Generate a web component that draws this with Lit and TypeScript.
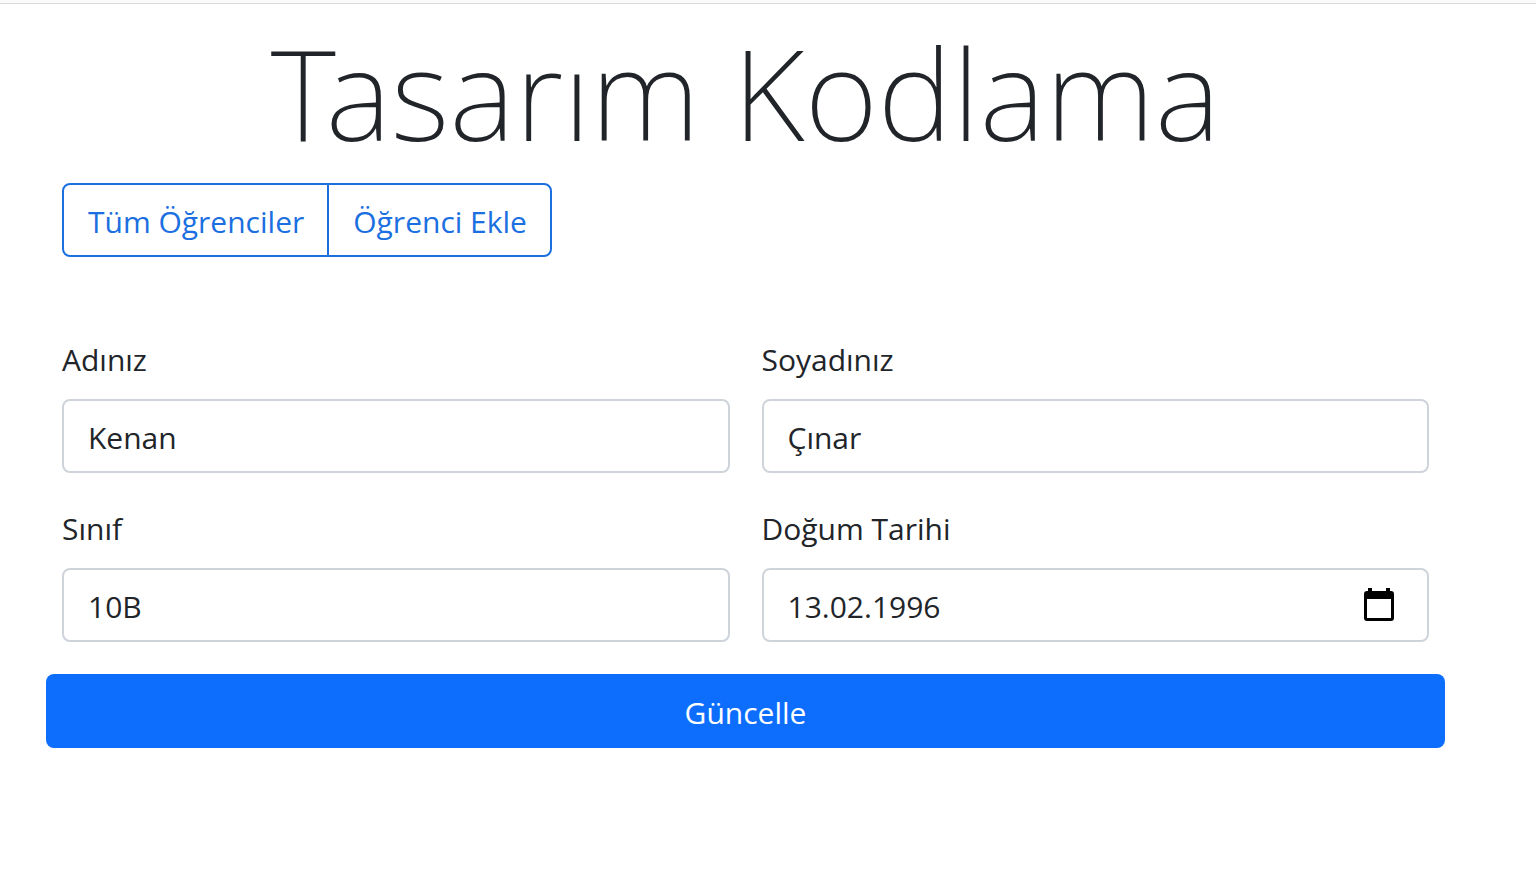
import { LitElement, html, css } from "lit";
import { customElement } from "lit/decorators.js";

@customElement("app-root")
export class AppRoot extends LitElement {
  static styles = css`
    :host {
      display: block;
      min-height: 100vh;
      box-sizing: border-box;
      background: #fff;
      color: #212529;
      font: 400 30px/47px "Open Sans", "Noto Sans", sans-serif;
    }
    *, *::before, *::after { box-sizing: border-box; }
    .edge {
      height: 4px;
      background: #fbfbfb;
      border-bottom: 1px solid #d9dadb;
    }
    .container {
      margin-left: 46px;
      margin-right: 91px;
    }
    h1 {
      margin: 0;
      padding-top: 12px;
      text-align: center;
      font-family: "Noto Sans", "Open Sans", sans-serif;
      font-weight: 200;
      font-size: 126px;
      line-height: 153px;
      white-space: nowrap;
    }
    nav {
      display: flex;
      margin: 14px 16px 0;
    }
    nav a {
      padding: 13px 23px 10px 24px;
      border: 2px solid #1b6fe0;
      color: #1b6fe0;
      text-decoration: none;
    }
    nav a:first-child { border-radius: 8px 0 0 8px; }
    nav a:last-child { border-radius: 0 8px 8px 0; margin-left: -2px; }
    form { margin: 79px 0 0; }
    .grid {
      display: grid;
      grid-template-columns: 1fr 1fr;
      gap: 32px;
      padding: 0 16px;
    }
    .field { display: flex; flex-direction: column; gap: 16px; }
    .control { display: grid; align-items: center; }
    input {
      width: 100%;
      height: 74px;
      padding: 2px 24px 0;
      border: 2px solid #ced4da;
      border-radius: 8px;
      background: #fff;
      color: #212529;
      font: inherit;
    }
    .control input, .picker { grid-area: 1 / 1; }
    .picker {
      justify-self: end;
      margin-right: 35px;
      padding: 0;
      border: 0;
      background: none;
      line-height: 0;
    }
    .submit {
      display: block;
      width: 100%;
      height: 74px;
      margin-top: 32px;
      padding: 2px 24px 0;
      border: 0;
      border-radius: 8px;
      background: #0d6efd;
      color: #fff;
      font: inherit;
    }
  `;

  private field(id: string, label: string, value: string) {
    return html`<div class="field">
      <label for=${id}>${label}</label>
      <input id=${id} type="text" .value=${value} />
    </div>`;
  }

  render() {
    return html`<div class="edge"></div>
    <main class="container">
      <h1>Tasarım Kodlama</h1>
      <nav>
        <a href="#liste">Tüm Öğrenciler</a>
        <a href="#ekle">Öğrenci Ekle</a>
      </nav>
      <form @submit=${(e: Event) => e.preventDefault()}>
        <div class="grid">
          ${this.field("ad", "Adınız", "Kenan")}
          ${this.field("soyad", "Soyadınız", "Çınar")}
          ${this.field("sinif", "Sınıf", "10B")}
          <div class="field">
            <label for="dogum">Doğum Tarihi</label>
            <div class="control">
              <input id="dogum" type="text" inputmode="numeric" .value=${"13.02.1996"} />
              <button class="picker" type="button" aria-label="Takvim">
                <svg width="30" height="34" viewBox="0 0 30 34">
                  <path fill="#000" fill-rule="evenodd" d="M4 0h4v3h14V0h4v3h1a3 3 0 0 1 3 3v24a3 3 0 0 1-3 3H3a3 3 0 0 1-3-3V6a3 3 0 0 1 3-3h1zM3 11v19h24V11z" />
                </svg>
              </button>
            </div>
          </div>
        </div>
        <button class="submit" type="submit">Güncelle</button>
      </form>
    </main>`;
  }
}
